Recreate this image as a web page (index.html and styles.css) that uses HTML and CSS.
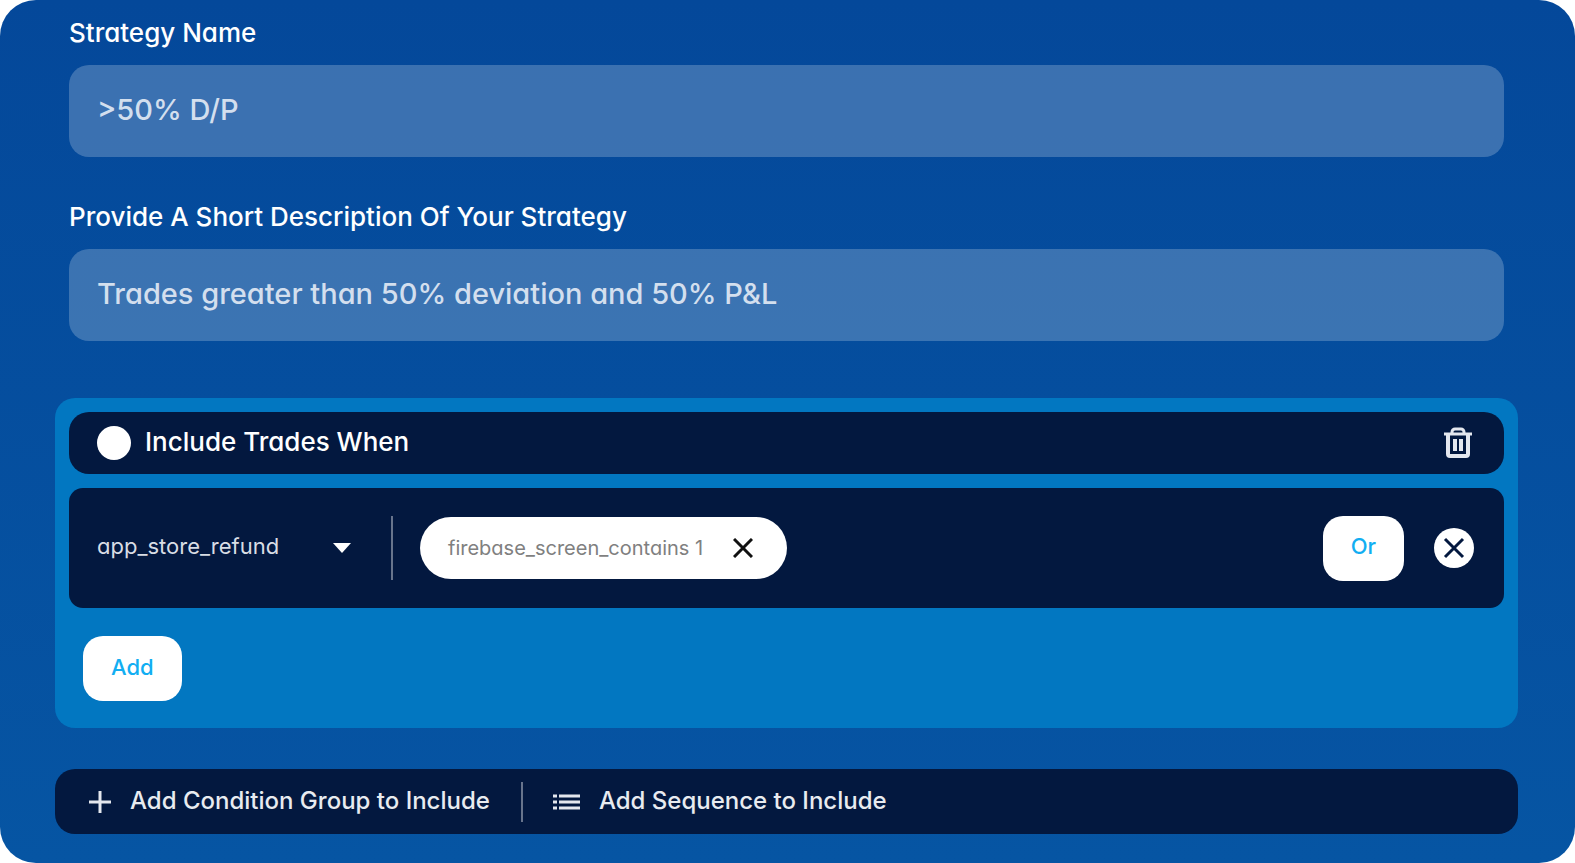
FILE: index.html
```html
<!DOCTYPE html>
<html lang="en">
<head>
<meta charset="UTF-8">
<meta name="viewport" content="width=device-width, initial-scale=1.0">
<title>Strategy Builder</title>
<link rel="stylesheet" href="styles.css">
</head>
<body>
<form class="builder">
    <div class="field">
        <label for="strategyName">Strategy Name</label>
        <input type="text" id="strategyName" value="&gt;50% D/P">
    </div>
    <div class="field">
        <label for="strategyDescription">Provide A Short Description Of Your Strategy</label>
        <input type="text" id="strategyDescription" value="Trades greater than 50% deviation and 50% P&amp;L">
    </div>

    <section class="group">
        <div class="group-header">
            <input type="radio" id="includeTrades" name="groupMode">
            <label for="includeTrades">Include Trades When</label>
            <button type="button" class="icon-button push-right" aria-label="Delete group">
                <svg width="28" height="32" viewBox="0 0 28 32" fill="none" stroke="#e4e7ee">
                    <path d="M0 7h28" stroke-width="3"/>
                    <path d="M8 7V5a3 3 0 0 1 3-3h6a3 3 0 0 1 3 3v2" stroke-width="3"/>
                    <path d="M4 8v19a2 2 0 0 0 2 2h16a2 2 0 0 0 2-2V8" stroke-width="4"/>
                    <path d="M11 12v12M17 12v12" stroke-width="4"/>
                </svg>
            </button>
        </div>

        <div class="condition">
            <div class="select-wrap">
                <select aria-label="Event">
                    <option>app_store_refund</option>
                </select>
                <svg class="caret" width="18" height="10" viewBox="0 0 18 10">
                    <path d="M0 0h18L9 10z" fill="#fff"/>
                </svg>
            </div>
            <div class="chip">
                <span>firebase_screen_contains 1</span>
                <button type="button" class="icon-button" aria-label="Remove filter">
                    <svg width="20" height="20" viewBox="0 0 20 20" stroke="#111" stroke-width="3">
                        <path d="M1 1l18 18M19 1L1 19"/>
                    </svg>
                </button>
            </div>
            <button type="button" class="button push-right">Or</button>
            <button type="button" class="icon-button" aria-label="Remove condition">
                <svg width="40" height="40" viewBox="0 0 40 40">
                    <circle cx="20" cy="20" r="20" fill="#fff"/>
                    <path d="M11 11l18 18M29 11L11 29" stroke="#03183f" stroke-width="3"/>
                </svg>
            </button>
        </div>

        <button type="button" class="button add">Add</button>
    </section>

    <div class="toolbar">
        <button type="button" class="tool">
            <svg width="22" height="22" viewBox="0 0 22 22" stroke="#e4e7ee" stroke-width="3">
                <path d="M0 11h22M11 0v22"/>
            </svg>
            <span>Add Condition Group to Include</span>
        </button>
        <button type="button" class="tool">
            <svg width="27" height="16" viewBox="0 0 27 16" stroke="#e4e7ee" stroke-width="3">
                <path d="M0 2h4M6 2h21M0 8h4M6 8h21M0 14h4M6 14h21"/>
            </svg>
            <span>Add Sequence to Include</span>
        </button>
    </div>
</form>
</body>
</html>
```
FILE: styles.css
```css
* {
    box-sizing: border-box;
}

body {
    margin: 0;
    background-color: #fff;
    color: #fff;
    font-family: Inter, "Liberation Sans", sans-serif;
    /* single-storey a */
    font-feature-settings: "cv11";
}

input,
select,
button {
    font: inherit;
    font-feature-settings: inherit;
    color: inherit;
    margin: 0;
}

button {
    border: none;
    cursor: pointer;
}

svg {
    display: block;
}

.builder {
    min-height: 100vh;
    padding: 16px 57px 28px 55px;
    border-radius: 36px;
    background: linear-gradient(#04489a, #0655a3);
}

.field {
    display: flex;
    flex-direction: column;
    gap: 15px;
    margin: 0 14px 43px;
}

.field label {
    font-size: 26px;
    font-weight: 500;
    line-height: 34px;
}

.field input {
    height: 92px;
    padding: 0 28px 4px;
    border: none;
    border-radius: 20px;
    background-color: rgba(255, 255, 255, 0.22);
    color: #d3dfee;
    font-size: 29px;
    font-weight: 500;
}

.group {
    margin-top: 57px;
    padding: 14px 14px 27px;
    border-radius: 20px;
    background-color: #0277c1;
}

.group-header {
    display: flex;
    align-items: center;
    gap: 14px;
    height: 62px;
    padding: 0 32px 0 28px;
    border-radius: 20px;
    background-color: #03183f;
    font-size: 26px;
    font-weight: 500;
}

.group-header label {
    padding-bottom: 3px;
}

.group-header input {
    appearance: none;
    width: 34px;
    height: 34px;
    border-radius: 50%;
    background-color: #fff;
}

.condition {
    display: flex;
    align-items: center;
    height: 120px;
    margin-top: 14px;
    padding: 0 30px 0 28px;
    border-radius: 14px;
    background-color: #03183f;
}

.select-wrap {
    display: flex;
    align-items: center;
    width: 296px;
    height: 64px;
    border-right: 2px solid #68748c;
}

.select-wrap select {
    appearance: none;
    width: 236px;
    height: 64px;
    padding: 0 0 4px;
    border: none;
    background: none;
    color: #d9dde5;
    font-size: 22px;
}

.caret {
    pointer-events: none;
}

.chip {
    display: flex;
    align-items: center;
    gap: 30px;
    height: 62px;
    margin-left: 27px;
    padding: 0 34px 0 28px;
    border-radius: 31px;
    background-color: #fff;
    color: #808080;
    font-size: 20px;
}

.icon-button {
    padding: 0;
    background: none;
}

.push-right {
    margin-left: auto;
}

.button {
    height: 65px;
    padding: 0 28px 4px;
    border-radius: 20px;
    background-color: #fff;
    color: #12aef2;
    font-size: 22px;
    font-weight: 500;
}

.condition .button {
    margin-right: 30px;
}

.button.add {
    display: block;
    margin: 28px 0 0 14px;
}

.toolbar {
    display: flex;
    align-items: center;
    height: 65px;
    margin-top: 41px;
    padding: 0 34px;
    border-radius: 20px;
    background-color: #03183f;
}

.tool {
    display: flex;
    align-items: center;
    gap: 19px;
    height: 40px;
    padding: 0;
    background: none;
    color: #e8ebf0;
    font-size: 24px;
    font-weight: 500;
}

.tool span {
    padding-bottom: 2px;
}

.tool + .tool {
    margin-left: 31px;
    padding-left: 30px;
    border-left: 2px solid #68748c;
}
```
